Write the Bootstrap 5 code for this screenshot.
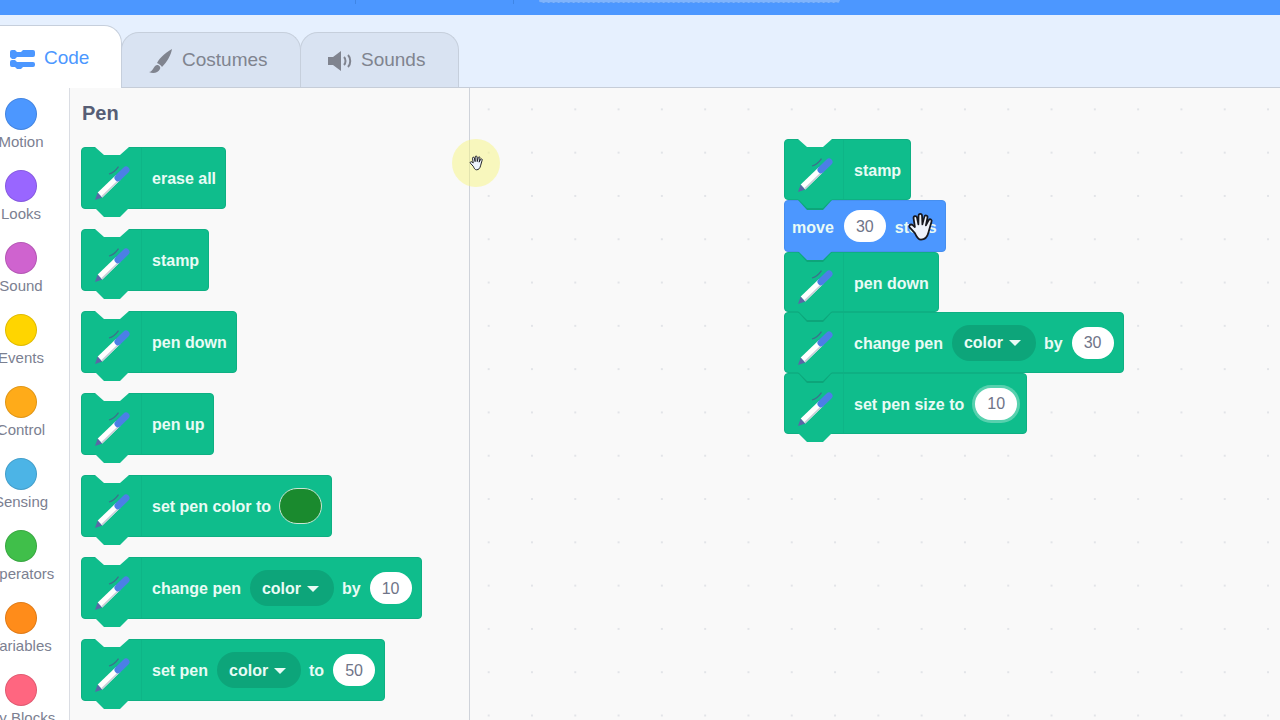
<!DOCTYPE html>
<html lang="en">
  <head>
    <meta charset="UTF-8" />
    <meta name="viewport" content="width=device-width, initial-scale=1.0" />
    <title>Scratch editor</title>
    <link rel="stylesheet" href="https://cdn.jsdelivr.net/npm/bootstrap@5.3.0/dist/css/bootstrap.min.css" />
    <style>
      html, body {
        height: 100%;
        overflow: hidden;
      }
      body {
        font-family: "Liberation Sans", Arial, sans-serif;
        background-color: #f9f9f9;
      }
      .top-strip {
        height: 15px;
        background-color: #4c97ff;
      }
      .top-tick {
        width: 1px;
        height: 4px;
        margin-left: 355px;
        background-color: #3f86e6;
      }
      .top-tick + .top-tick {
        margin-left: 157px;
      }
      .top-field {
        width: 301px;
        height: 3px;
        margin-left: 25px;
        background-color: #7fb3fb;
        border-bottom: 1px dashed #5c9df5;
        border-radius: 0 0 3px 3px;
      }
      .tab-strip {
        height: 73px;
        background-color: #e6f0fe;
        border-bottom: 1px solid #c6cdd8;
      }
      .editor-tab {
        height: 55px;
        color: #80848f;
        background-color: #d9e3f2;
        border: 1px solid #c6cfdc;
        border-bottom: 0;
        border-radius: 18px 18px 0 0;
        font-size: 19px;
      }
      .tab-code {
        width: 122px;
        height: 63px;
        margin-bottom: -1px;
        color: #4c97ff;
        background-color: #fff;
        border-left: 0;
        border-top-left-radius: 0;
        padding-left: 9px;
        gap: 8px;
        padding-top: 3px;
        position: relative;
        z-index: 1;
      }
      .tab-costumes {
        width: 180px;
        margin-left: -1px;
        padding-left: 26px;
        gap: 10px;
        padding-top: 1px;
      }
      .tab-sounds {
        width: 159px;
        margin-left: -1px;
        padding-left: 26px;
        gap: 8px;
        padding-top: 1px;
      }
      .editor-body {
        height: 632px;
      }
      .cat-rail {
        width: 70px;
        padding-top: 10px;
        background-color: #fff;
        border-right: 1px solid #dadde3;
        overflow: hidden;
      }
      .cat-item {
        flex: none;
        width: 42px;
        height: 72px;
        color: #7b8091;
        font-size: 15px;
        line-height: 20px;
        white-space: nowrap;
      }
      .cat-dot {
        flex: none;
        width: 32px;
        height: 32px;
        margin-bottom: 2px;
        border-radius: 50%;
        border: 1px solid rgba(0, 0, 0, .12);
      }
      .block-tray {
        width: 400px;
        padding: 12px 0 0 11px;
        border-right: 1px solid #cfd3da;
        overflow: hidden;
      }
      .tray-title {
        height: 47px;
        padding-left: 1px;
        font-size: 20px;
        font-weight: 700;
        color: #575e75;
        line-height: 26px;
      }
      .canvas-area {
        flex: 1;
        position: relative;
        background-image: radial-gradient(circle, #e2e4e8 1px, transparent 1.4px);
        background-size: 43.3px 43.3px;
        background-position: 430px 43px;
      }
      .sb-block {
        position: relative;
        height: 62px;
        width: fit-content;
        padding-right: 9px;
        background-color: #0fbd8c;
        border: 1px solid #0eb083;
        border-radius: 4px;
        color: #e9fbf5;
        font-size: 16px;
        font-weight: 700;
        white-space: nowrap;
      }
      .sb-block::before,
      .sb-block::after {
        content: "";
        position: absolute;
        left: 13px;
        width: 34px;
      }
      .sb-block::before {
        top: -1px;
        height: 8px;
        background-color: #f9f9f9;
        clip-path: polygon(0 0, 9px 8px, 25px 8px, 34px 0);
      }
      .sb-block::after {
        bottom: -9px;
        height: 9px;
        background-color: inherit;
        clip-path: polygon(0 0, 34px 0, 25px 9px, 9px 9px);
      }
      /* joined blocks: the tab above fills the notch, only its dark edge shows */
      .sb-stack .sb-block + .sb-block::before {
        height: 10px;
        background-color: #0da57a;
        clip-path: polygon(0 0, 34px 0, 25px 10px, 9px 10px);
      }
      .tray-block {
        margin-bottom: 20px;
      }
      .sb-hat {
        width: 60px;
        height: 100%;
        padding-left: 10px;
        margin-right: 10px;
        border-right: 1px solid #0eb587;
      }
      .sb-hat svg {
        margin-top: 8px;
      }
      .sb-stack .sb-hat {
        width: 59px;
      }
      .sb-move {
        height: 52px;
        padding-left: 7px;
        padding-right: 8px;
        gap: 9px;
        background-color: #4c97ff;
        border-color: #478fef;
      }
      .sb-text {
        padding-top: 2px;
      }
      .sb-stack .sb-text {
        padding-top: 3px;
      }
      .sb-num {
        flex: none;
        width: 42px;
        height: 32px;
        margin: 0 0 0 9px;
        border-radius: 16px;
        background-color: #fff;
        color: #6f7488;
        font-weight: 400;
        padding-top: 1px;
      }
      .sb-move .sb-num {
        margin: 0 0 0 1px;
      }
      .sb-num.sb-ring {
        margin-left: 11px;
        box-shadow: 0 0 0 3px rgba(255, 255, 255, .3);
      }
      .sb-menu {
        flex: none;
        width: 84px;
        height: 36px;
        margin: 0 8px 0 9px;
        padding-left: 12px;
        padding-top: 1px;
        gap: 6px;
        border-radius: 18px;
        background-color: #0da57a;
      }
      .sb-caret {
        width: 0;
        height: 0;
        border: 6px solid transparent;
        border-top: 6px solid #e9fbf5;
        border-bottom: 0;
      }
      .sb-swatch {
        flex: none;
        width: 43px;
        height: 36px;
        margin-left: 8px;
        border-radius: 18px;
        background-color: #1a8a2e;
        border: 1px solid #c9e6d6;
      }
      .sb-stack {
        position: absolute;
        left: 314px;
        top: 51px;
      }
      .sb-stack .sb-block:nth-child(1) { z-index: 5; height: 61px; }
      .sb-stack .sb-block:nth-child(2) { z-index: 4; height: 52px; }
      .sb-stack .sb-block:nth-child(3) { z-index: 3; height: 60px; }
      .sb-stack .sb-block:nth-child(4) { z-index: 2; height: 61px; }
      .sb-stack .sb-block:nth-child(5) { z-index: 1; height: 61px; }
      .click-halo {
        position: absolute;
        left: 452px;
        top: 139px;
        width: 48px;
        height: 48px;
        border-radius: 50%;
        background-color: rgba(248, 245, 130, .5);
      }
      .hand-small {
        position: absolute;
        left: 469px;
        top: 155px;
      }
      .hand-big {
        position: absolute;
        left: 907px;
        top: 212px;
        z-index: 9;
      }
    </style>
  </head>
  <body>
    <svg width="0" height="0" class="position-absolute">
      <symbol id="pen-icon" viewBox="0 0 42 38">
        <path d="M3 37 L5.7 29.6 L10.3 34.4 Z" fill="#5b66a6" />
        <path d="M5.7 29.6 L23.7 12.3 L28.3 17.1 L10.3 34.4 Z" fill="#fff" />
        <path d="M9.7 33.8 L27.7 16.5" stroke="#c9ced8" stroke-width="1.6" />
        <path d="M26 14.7 L34 7" stroke="#4c7fe6" stroke-width="7" stroke-linecap="round" />
        <path d="M17 11 C20 10.5 23.5 8 26.5 3.7" stroke="#3d6f8c" stroke-width="1.2" fill="none" />
      </symbol>
      <symbol id="hand-icon" viewBox="0 0 32 34">
        <path d="M9 24 L3 17.5 C1.5 15.5 4 13 6.5 14.8 L9 17 L7.5 7 C7.2 4.2 10.8 3.6 11.5 6.5 L13 14 L13.2 4.2 C13.3 1.4 17 1.4 17.2 4.2 L17.6 14 L19.8 5.4 C20.5 2.8 24 3.6 23.4 6.4 L21.6 15.2 L24.8 9.2 C26.2 7 29 8.6 28 11 L24.6 23 C23.4 28 21 31.5 16 31.5 C12.6 31.5 10.8 28 9 24 Z" fill="#eef3fb" stroke="#16181f" stroke-width="2" stroke-linejoin="round" />
      </symbol>
    </svg>

    <div class="top-strip d-flex align-items-start">
      <div class="top-tick"></div>
      <div class="top-tick"></div>
      <div class="top-field"></div>
    </div>

    <div class="tab-strip d-flex align-items-end">
      <div class="editor-tab tab-code d-flex align-items-center">
        <svg width="27" height="20" viewBox="0 0 27 20">
          <path d="M1 3 a2 2 0 0 1 2-2 h3 l2 2 h4 l2-2 h10 a2 2 0 0 1 2 2 v3 a2 2 0 0 1-2 2 h-16 l-2 2 h-3 l-2-2 a2 2 0 0 1 0-0 z" fill="#4c97ff" />
          <path d="M1 13 a2 2 0 0 1 2-2 h3 l2 2 h16 a2 2 0 0 1 2 2 v1 a2 2 0 0 1-2 2 h-10 l-2 2 h-4 l-2-2 h-3 a2 2 0 0 1-2-2 z" fill="#4c97ff" />
        </svg>
        <span>Code</span>
      </div>
      <div class="editor-tab tab-costumes d-flex align-items-center">
        <svg width="24" height="26" viewBox="0 0 24 26">
          <path d="M24 1 C20 3 12 9 9 15 C11 16 13 17 14 19 C19 14 23 7 24 1 Z" fill="#80848f" />
          <path d="M1 24 C5 24 5 18 9 17 C11 17 13 19 12 21 C10 25 5 26 1 24 Z" fill="#80848f" />
        </svg>
        <span>Costumes</span>
      </div>
      <div class="editor-tab tab-sounds d-flex align-items-center">
        <svg width="26" height="20" viewBox="0 0 26 20">
          <path d="M1 6 H6 L14 0 V20 L6 14 H1 Z" fill="#80848f" />
          <path d="M17 6 C19 8 19 12 17 14 M21 4 C24 7 24 13 21 16" stroke="#80848f" stroke-width="2" fill="none" />
        </svg>
        <span>Sounds</span>
      </div>
    </div>

    <div class="editor-body d-flex">
      <div class="cat-rail d-flex flex-column">
        <div class="cat-item d-flex flex-column align-items-center"><span class="cat-dot" style="background-color:#4c97ff"></span>Motion</div>
        <div class="cat-item d-flex flex-column align-items-center"><span class="cat-dot" style="background-color:#9966ff"></span>Looks</div>
        <div class="cat-item d-flex flex-column align-items-center"><span class="cat-dot" style="background-color:#cf63cf"></span>Sound</div>
        <div class="cat-item d-flex flex-column align-items-center"><span class="cat-dot" style="background-color:#ffd500"></span>Events</div>
        <div class="cat-item d-flex flex-column align-items-center"><span class="cat-dot" style="background-color:#ffab19"></span>Control</div>
        <div class="cat-item d-flex flex-column align-items-center"><span class="cat-dot" style="background-color:#4cb4e6"></span>Sensing</div>
        <div class="cat-item d-flex flex-column align-items-center"><span class="cat-dot" style="background-color:#40bf4a"></span>Operators</div>
        <div class="cat-item d-flex flex-column align-items-center"><span class="cat-dot" style="background-color:#ff8c1a"></span>Variables</div>
        <div class="cat-item d-flex flex-column align-items-center"><span class="cat-dot" style="background-color:#ff6680"></span>My Blocks</div>
      </div>

      <div class="block-tray">
        <div class="tray-title">Pen</div>
        <div class="sb-block tray-block d-flex align-items-center">
          <span class="sb-hat d-flex align-items-center"><svg width="42" height="38"><use href="#pen-icon" /></svg></span>
          <span class="sb-text">erase all</span>
        </div>
        <div class="sb-block tray-block d-flex align-items-center">
          <span class="sb-hat d-flex align-items-center"><svg width="42" height="38"><use href="#pen-icon" /></svg></span>
          <span class="sb-text">stamp</span>
        </div>
        <div class="sb-block tray-block d-flex align-items-center">
          <span class="sb-hat d-flex align-items-center"><svg width="42" height="38"><use href="#pen-icon" /></svg></span>
          <span class="sb-text">pen down</span>
        </div>
        <div class="sb-block tray-block d-flex align-items-center">
          <span class="sb-hat d-flex align-items-center"><svg width="42" height="38"><use href="#pen-icon" /></svg></span>
          <span class="sb-text">pen up</span>
        </div>
        <div class="sb-block tray-block d-flex align-items-center">
          <span class="sb-hat d-flex align-items-center"><svg width="42" height="38"><use href="#pen-icon" /></svg></span>
          <span class="sb-text">set pen color to</span>
          <span class="sb-swatch"></span>
        </div>
        <div class="sb-block tray-block d-flex align-items-center">
          <span class="sb-hat d-flex align-items-center"><svg width="42" height="38"><use href="#pen-icon" /></svg></span>
          <span class="sb-text">change pen</span>
          <span class="sb-menu d-flex align-items-center">color <i class="sb-caret"></i></span>
          <span class="sb-text">by</span>
          <span class="sb-num d-flex align-items-center justify-content-center">10</span>
        </div>
        <div class="sb-block tray-block d-flex align-items-center">
          <span class="sb-hat d-flex align-items-center"><svg width="42" height="38"><use href="#pen-icon" /></svg></span>
          <span class="sb-text">set pen</span>
          <span class="sb-menu d-flex align-items-center">color <i class="sb-caret"></i></span>
          <span class="sb-text">to</span>
          <span class="sb-num d-flex align-items-center justify-content-center">50</span>
        </div>
      </div>

      <div class="canvas-area">
        <div class="sb-stack">
          <div class="sb-block d-flex align-items-center">
            <span class="sb-hat d-flex align-items-center"><svg width="42" height="38"><use href="#pen-icon" /></svg></span>
            <span class="sb-text">stamp</span>
          </div>
          <div class="sb-block sb-move d-flex align-items-center">
            <span class="sb-text">move</span>
            <span class="sb-num d-flex align-items-center justify-content-center">30</span>
            <span class="sb-text">steps</span>
          </div>
          <div class="sb-block d-flex align-items-center">
            <span class="sb-hat d-flex align-items-center"><svg width="42" height="38"><use href="#pen-icon" /></svg></span>
            <span class="sb-text">pen down</span>
          </div>
          <div class="sb-block d-flex align-items-center">
            <span class="sb-hat d-flex align-items-center"><svg width="42" height="38"><use href="#pen-icon" /></svg></span>
            <span class="sb-text">change pen</span>
            <span class="sb-menu d-flex align-items-center">color <i class="sb-caret"></i></span>
            <span class="sb-text">by</span>
            <span class="sb-num d-flex align-items-center justify-content-center">30</span>
          </div>
          <div class="sb-block d-flex align-items-center">
            <span class="sb-hat d-flex align-items-center"><svg width="42" height="38"><use href="#pen-icon" /></svg></span>
            <span class="sb-text">set pen size to</span>
            <span class="sb-num sb-ring d-flex align-items-center justify-content-center">10</span>
          </div>
        </div>
      </div>
    </div>

    <div class="click-halo"></div>
    <svg class="hand-small" width="15" height="16"><use href="#hand-icon" /></svg>
    <svg class="hand-big" width="28" height="30"><use href="#hand-icon" /></svg>

    <script src="https://cdn.jsdelivr.net/npm/bootstrap@5.3.0/dist/js/bootstrap.bundle.min.js"></script>
  </body>
</html>
